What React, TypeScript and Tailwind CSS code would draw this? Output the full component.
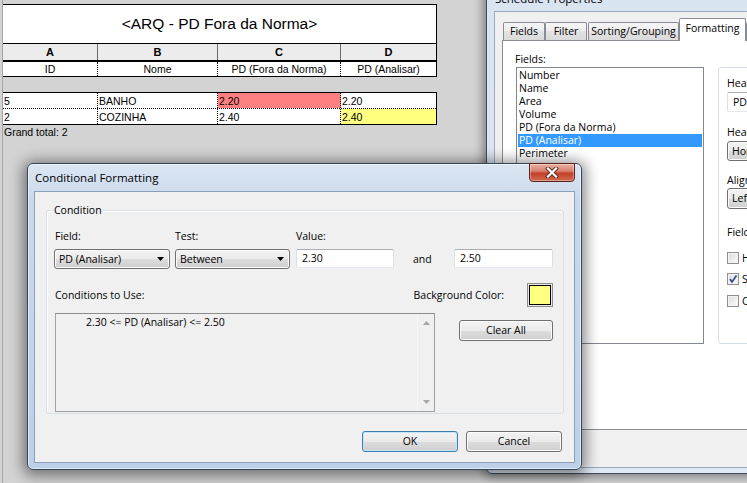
import React from "react";

const UI = "font-['Open_Sans',sans-serif] text-[10.5px] leading-[15px] text-black";
const BTN_BG = "bg-[linear-gradient(#f2f2f2,#ebebeb_50%,#dddddd_50%,#cfcfcf)]";

function DownArrow({ color = "#000" }: { color?: string }) {
  return (
    <svg width="7" height="4" viewBox="0 0 7 4" className="absolute right-[5px] top-1/2 -translate-y-1/2">
      <path d="M0 0H7L3.5 4Z" fill={color} />
    </svg>
  );
}

function Combo({ className, text }: { className: string; text: string }) {
  return (
    <div
      className={`relative flex items-center pl-[4px] rounded-[3px] border border-[#707070] shadow-[inset_0_0_0_1px_#fcfcfc] whitespace-nowrap overflow-hidden bg-[linear-gradient(#f2f2f2,#ebebeb_50%,#dddddd_50%,#cfcfcf)] ${className}`}
    >
      <span>{text}</span>
      <DownArrow />
    </div>
  );
}

function TextBox({ className, text }: { className: string; text: string }) {
  return (
    <div
      className={`flex items-center pl-[5px] bg-white border border-[#abadb3] border-l-[#dbdfe6] border-r-[#dbdfe6] border-b-[#e3e9ef] rounded-[2px] whitespace-nowrap overflow-hidden ${className}`}
    >
      {text}
    </div>
  );
}

function Button({ className, children, isDefault }: { className: string; children: React.ReactNode; isDefault?: boolean }) {
  return (
    <div
      className={`flex items-center justify-center rounded-[3px] border ${
        isDefault ? "border-[#3c7fb1] shadow-[inset_0_0_0_1px_#c4e5f8]" : "border-[#707070] shadow-[inset_0_0_0_1px_#fcfcfc]"
      } ${BTN_BG} ${className}`}
    >
      {children}
    </div>
  );
}

function CheckBox({ checked, label }: { checked?: boolean; label: string }) {
  return (
    <div className="flex items-center h-[12px] whitespace-nowrap">
      <div className="relative w-[12px] h-[12px] border border-[#8f8f8f] bg-[linear-gradient(135deg,#dcdcdc,#fbfbfb)] shadow-[inset_0_0_0_1px_#f4f4f4]">
        {checked && (
          <svg width="10" height="10" viewBox="0 0 10 10" className="absolute left-0 top-0">
            <path d="M2 5 L4 8 L8.5 1.5" stroke="#3a4f8f" strokeWidth="1.8" fill="none" />
          </svg>
        )}
      </div>
      <span className="ml-[3px]">{label}</span>
    </div>
  );
}

function Schedule() {
  const cols = ["w-[95px]", "w-[120px]", "w-[123px]", "w-[95px]"];
  const names = ["ID", "Nome", "PD (Fora da Norma)", "PD (Analisar)"];
  const rows = [
    ["5", "BANHO", "2.20", "2.20"],
    ["2", "COZINHA", "2.40", "2.40"],
  ];
  return (
    <div className="pl-[2px] pt-[4px] w-[437px] font-['Liberation_Sans',Arial,sans-serif] text-black">
      <div className="h-[40px] border border-black bg-white flex items-center justify-center text-[15.5px]">
        &lt;ARQ - PD Fora da Norma&gt;
      </div>
      <div className="flex h-[18px] border-x border-b-2 border-black bg-[#ececec] text-[11px] font-bold">
        {["A", "B", "C", "D"].map((l, i) => (
          <div key={l} className={`${cols[i]} ${i < 3 ? "border-r border-[#6a6a6a]" : ""} flex items-center justify-center`}>
            {l}
          </div>
        ))}
      </div>
      <div className="flex h-[15px] border-x border-b border-black bg-white text-[10.5px]">
        {names.map((n, i) => (
          <div key={n} className={`${cols[i]} ${i < 3 ? "border-r border-dotted border-black" : ""} flex items-center justify-center leading-[14px]`}>
            {n}
          </div>
        ))}
      </div>
      <div className="h-[15px]" />
      <div className="border border-black bg-white text-[10.5px]">
        {rows.map((r, ri) => (
          <div key={ri} className={`flex h-[15px] ${ri === 0 ? "h-[16px] border-b border-dotted border-black" : ""}`}>
            {r.map((c, ci) => (
              <div
                key={ci}
                className={`${cols[ci]} ${ci < 3 ? "border-r border-dotted border-black" : ""} ${
                  ri === 0 && ci === 2 ? "bg-[#ff8080]" : ""
                } ${ri === 1 && ci === 3 ? "bg-[#ffff80]" : ""} flex items-center pl-[1px] leading-[14px]`}
              >
                {c}
              </div>
            ))}
          </div>
        ))}
      </div>
      <div className="pl-[2px] text-[10.5px] leading-[14px]">Grand total: 2</div>
    </div>
  );
}

function SchedulePropsWindow() {
  const fields = ["Number", "Name", "Area", "Volume", "PD (Fora da Norma)", "PD (Analisar)", "Perimeter"];
  return (
    <div
      className={`absolute left-[486px] top-[-24px] w-[300px] h-[498px] rounded-[6px] border border-[#3b4d63] bg-[linear-gradient(#d9e4f1,#dfe8f3)] shadow-[0_0_10px_3px_rgba(0,0,0,0.4)] pt-[34px] pl-[7px] ${UI}`}
    >
      <div className="absolute left-[8px] top-[14px] text-[11.5px] whitespace-nowrap">Schedule Properties</div>
      <div className="h-[457px] bg-[#f0f0f0] border border-[#9aabbf] flex flex-col">
        <div className="h-[28px] flex items-end pl-[8px] shrink-0">
          <div className={`w-[42px] h-[18px] border border-b-0 border-[#898c95] rounded-t-[2px] flex items-center justify-center bg-[linear-gradient(#f6f6f6,#ececec_50%,#e2e2e2_50%,#dadada)]`}>Fields</div>
          <div className={`w-[42px] h-[18px] border border-b-0 border-[#898c95] rounded-t-[2px] flex items-center justify-center bg-[linear-gradient(#f6f6f6,#ececec_50%,#e2e2e2_50%,#dadada)]`}>Filter</div>
          <div className={`ml-px w-[91px] h-[18px] border border-b-0 border-[#898c95] rounded-t-[2px] flex items-center justify-center whitespace-nowrap bg-[linear-gradient(#f6f6f6,#ececec_50%,#e2e2e2_50%,#dadada)]`}>Sorting/Grouping</div>
          <div className="relative z-10 mb-[-1px] w-[67px] h-[23px] border border-b-0 border-[#898c95] rounded-t-[2px] bg-white flex items-start justify-center pt-[2px]">Formatting</div>
          <div className="w-[20px] h-[18px] border border-b-0 border-[#898c95] rounded-t-[2px] bg-[linear-gradient(#f6f6f6,#ececec_50%,#e2e2e2_50%,#dadada)]" />
        </div>
        <div className="ml-[7px] h-[390px] bg-white border border-[#898c95] flex pt-[11px] pl-[12px] shrink-0">
          <div className="w-[189px] shrink-0">
            <div>Fields:</div>
            <div className="ml-px w-[188px] h-[277px] border border-[#828790] bg-white pt-px pl-px pr-px">
              {fields.map((f) => (
                <div
                  key={f}
                  className={`h-[13px] leading-[13px] pl-px whitespace-nowrap ${f === "PD (Analisar)" ? "bg-[#3399ff] text-white" : ""}`}
                >
                  {f}
                </div>
              ))}
            </div>
          </div>
          <div className="ml-[14px] mt-[15px] w-[220px] h-[277px] shrink-0 rounded-[3px] border border-[#d5dfe5] pl-[8px] pt-[8px] whitespace-nowrap">
            <div>Heading:</div>
            <TextBox className="mt-[1px] w-[200px] h-[20px]" text="PD (Analisar)" />
            <div className="mt-[13px]">Heading orientation:</div>
            <Combo className="mt-[1px] w-[200px] h-[20px]" text="Horizontal" />
            <div className="mt-[12px]">Alignment:</div>
            <Combo className="w-[200px] h-[21px]" text="Left" />
            <div className="mt-[16px]">Field formatting:</div>
            <div className="mt-[12px]">
              <CheckBox label="Hidden field" />
            </div>
            <div className="mt-[9px]">
              <CheckBox checked label="Show conditional format on sheets" />
            </div>
            <div className="mt-[10px]">
              <CheckBox label="Calculate totals" />
            </div>
          </div>
        </div>
      </div>
    </div>
  );
}

function CloseButton() {
  return (
    <div className="absolute top-[-1px] right-[6px] w-[46px] h-[19px] rounded-b-[4px] border border-[#5c2118] bg-[linear-gradient(#eab0a2,#d98472_40%,#c4402a_55%,#cf6a52)] shadow-[inset_0_0_0_1px_rgba(255,255,255,0.35)] flex items-center justify-center">
      <svg width="14" height="11" viewBox="0 0 14 11">
        <path d="M3 1.5 L11 9.5 M11 1.5 L3 9.5" stroke="#5b2a22" strokeWidth="4" strokeLinecap="square" />
        <path d="M3 1.5 L11 9.5 M11 1.5 L3 9.5" stroke="#ffffff" strokeWidth="2.2" strokeLinecap="square" />
      </svg>
    </div>
  );
}

function ConditionalFormattingDialog() {
  return (
    <div
      className={`absolute left-[27px] top-[163px] w-[555px] h-[307px] flex flex-col rounded-[6px] border border-[#34465c] bg-[linear-gradient(#dce6f2,#c9d9ec_12%,#bcd0e8)] shadow-[0_2px_14px_4px_rgba(0,0,0,0.45),inset_0_0_0_1px_rgba(255,255,255,0.55)] ${UI}`}
    >
      <div className="relative h-[27px] shrink-0 flex items-center pl-[7px] text-[11.5px]">
        Conditional Formatting
        <CloseButton />
      </div>
      <div className="mx-[6px] h-[272px] shrink-0 bg-[#f0f0f0] border border-[#8a9fba] flex flex-col">
        <div className="relative ml-[11px] mt-[18px] w-[518px] h-[204px] rounded-[3px] border border-[#d5dfe5] shadow-[inset_1px_1px_0_#ffffff] pl-[7px] pr-[10px]">
          <span className="absolute left-[6px] top-[-8px] px-[1px] bg-[#f0f0f0]">Condition</span>
          <div className="mt-[18px] flex">
            <div className="w-[116px] pl-px">Field:</div>
            <div className="ml-[5px] w-[115px]">Test:</div>
            <div className="ml-[6px]">Value:</div>
          </div>
          <div className="mt-[5px] flex items-start">
            <Combo className="w-[116px] h-[20px]" text="PD (Analisar)" />
            <Combo className="ml-[5px] w-[115px] h-[20px]" text="Between" />
            <TextBox className="ml-[6px] w-[98px] h-[19px]" text="2.30" />
            <div className="ml-[19px] w-[41px] h-[20px] flex items-center">and</div>
            <TextBox className="w-[99px] h-[19px]" text="2.50" />
          </div>
          <div className="mt-[14px] h-[24px] flex items-center">
            <div className="pl-px">Conditions to Use:</div>
            <div className="ml-auto flex items-center">
              <span>Background Color:</span>
              <div className="ml-[23px] w-[26px] h-[24px] border border-[#8c8c8c] p-px bg-[#e8e8e8]">
                <div className="w-full h-full border border-black bg-[#ffff80]" />
              </div>
            </div>
          </div>
          <div className="mt-[6px] flex items-start">
            <div className="ml-px w-[380px] h-[99px] border border-[#a0a0a0] border-t-[#8c8c8c] bg-[#f0f0f0] flex">
              <div className="flex-1 pl-[30px] pt-px whitespace-nowrap">2.30 &lt;= PD (Analisar) &lt;= 2.50</div>
              <div className="w-[17px] flex flex-col items-center justify-between py-[7px] border-l border-[#f7f7f7]">
                <svg width="7" height="4" viewBox="0 0 7 4">
                  <path d="M0 4H7L3.5 0Z" fill="#a6a6a6" />
                </svg>
                <svg width="7" height="4" viewBox="0 0 7 4">
                  <path d="M0 0H7L3.5 4Z" fill="#a6a6a6" />
                </svg>
              </div>
            </div>
            <Button className="ml-auto mt-[7px] w-[94px] h-[21px]">Clear All</Button>
          </div>
        </div>
        <div className="mt-[17px] flex justify-end pr-[12px]">
          <Button isDefault className="w-[96px] h-[21px]">OK</Button>
          <Button className="ml-[8px] w-[96px] h-[21px]">Cancel</Button>
        </div>
      </div>
    </div>
  );
}

export default function App() {
  return (
    <div className="relative w-[747px] h-[483px] overflow-hidden bg-[#d3d3d3]">
      <div className="absolute left-[2px] top-0 bottom-0 w-px bg-[#a4a4a4]" />
      <Schedule />
      <SchedulePropsWindow />
      <ConditionalFormattingDialog />
    </div>
  );
}
